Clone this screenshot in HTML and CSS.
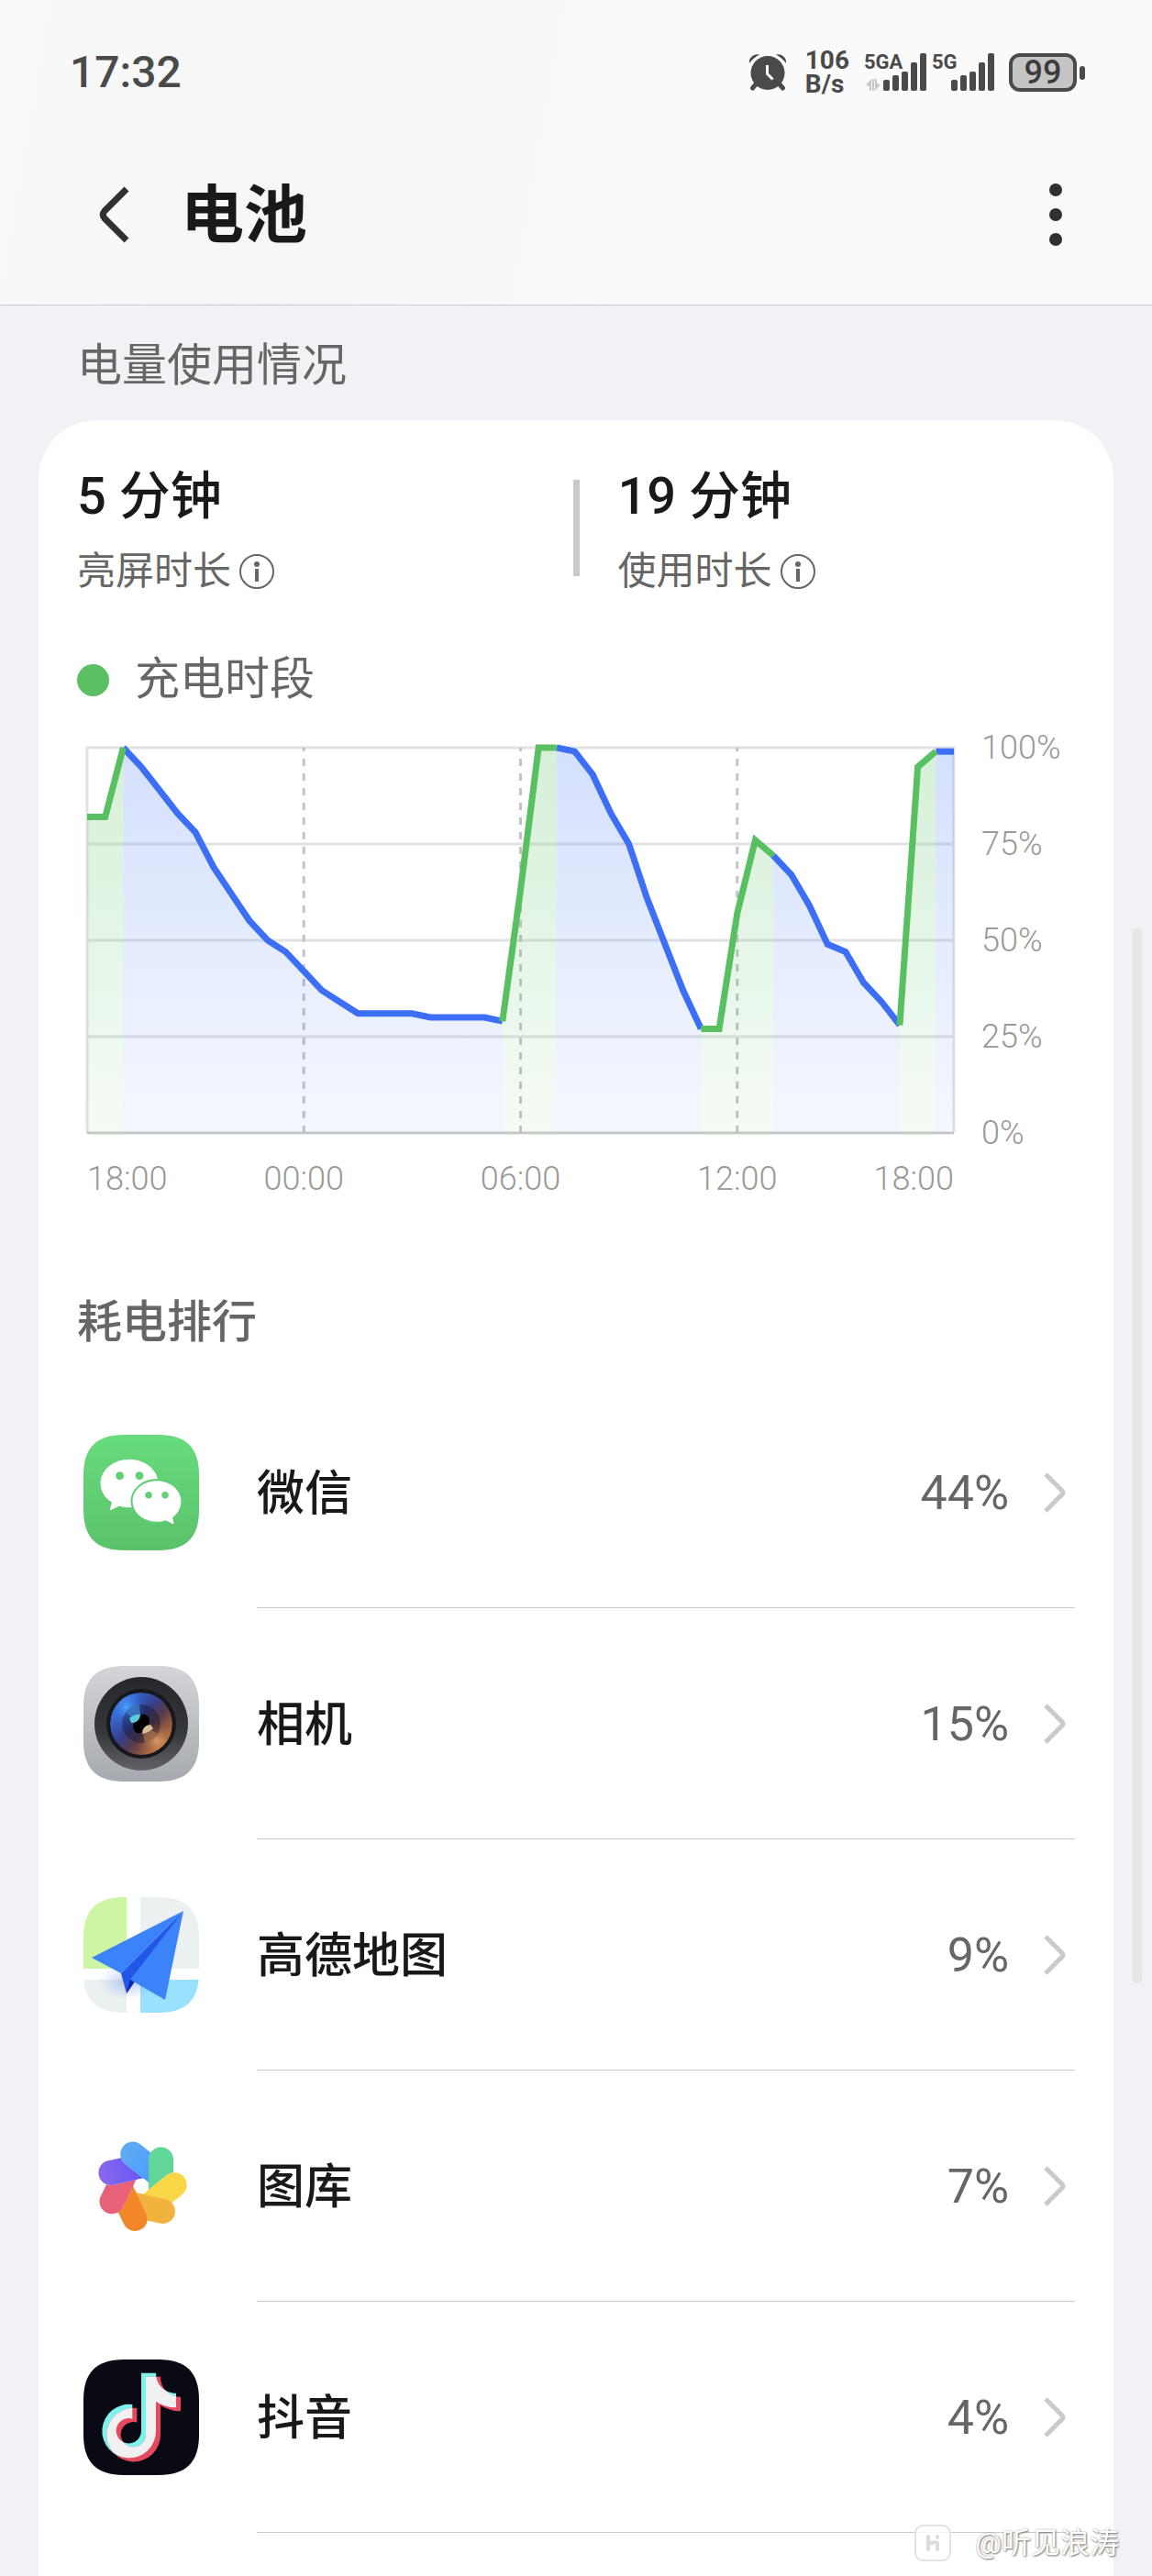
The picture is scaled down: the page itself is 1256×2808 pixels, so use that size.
FILE: index.html
```html
<!DOCTYPE html>
<html lang="zh-CN">
<head>
<meta charset="utf-8">
<meta name="viewport" content="width=device-width, initial-scale=1">
<title>电池</title>
<link rel="stylesheet" href="styles.css">
</head>
<body>
<svg class="defs" aria-hidden="true">
  <defs>
    <path id="tile" d="M0 44C0 14 14 0 44 0H82C112 0 126 14 126 44V82C126 112 112 126 82 126H44C14 126 0 112 0 82Z"/>
    <clipPath id="tile-clip"><use href="#tile"/></clipPath>
  </defs>
</svg>

<header class="header">
  <div class="status">
    <time class="clock">17:32</time>
    <div class="indicators">
      <svg class="alarm" viewBox="0 0 42 42" role="img" aria-label="闹钟">
        <g fill="none" stroke="#4a4a4a" stroke-width="5" stroke-linecap="round">
          <path d="M8 34L4.500 38M34 34L37.500 38"/>
        </g>
        <path d="M1 11C0 5 6 0 12 1.500C8 3.500 4 7 1 11ZM41 11C42 5 36 0 30 1.500C34 3.500 38 7 41 11Z" fill="#4a4a4a"/>
        <circle cx="21" cy="21.500" r="18.500" fill="#4a4a4a"/>
        <path d="M20.500 13V22.500L26.500 28.500" fill="none" stroke="#fafafa" stroke-width="3"/>
      </svg>
      <div class="speed"><span>106</span><span>B/s</span></div>
      <div class="signal">
        <span class="net">5GA</span>
        <svg class="bars" viewBox="0 0 68 42" aria-hidden="true">
          <g fill="#4a4a4a"><rect x="21" y="29" width="7" height="12" rx="2"/><rect x="31" y="24" width="7" height="17" rx="2"/><rect x="41" y="20" width="7" height="21" rx="2"/><rect x="51" y="10" width="7" height="31" rx="2"/><rect x="61" y="0" width="7" height="41" rx="2"/></g>
          <path d="M2 35L8 28V41H6V36ZM18 34L12 41V28H14V33ZM9 28H11V41H9Z" fill="#c6c6c6"/>
        </svg>
      </div>
      <div class="signal signal-second">
        <span class="net">5G</span>
        <svg class="bars" viewBox="0 0 68 42" aria-hidden="true">
          <g fill="#4a4a4a"><rect x="21" y="29" width="7" height="12" rx="2"/><rect x="31" y="24" width="7" height="17" rx="2"/><rect x="41" y="20" width="7" height="21" rx="2"/><rect x="51" y="10" width="7" height="31" rx="2"/><rect x="61" y="0" width="7" height="41" rx="2"/></g>
        </svg>
      </div>
      <div class="battery"><span class="level">99</span><i class="nub"></i></div>
    </div>
  </div>
  <div class="titlebar">
    <button class="icon-button" type="button" aria-label="返回">
      <svg class="back" viewBox="0 0 36 64"><path d="M31 4L7 28Q3.500 32 7 36L31 60" fill="none" stroke="#303030" stroke-width="7"/></svg>
    </button>
    <h1 class="title">电池</h1>
    <button class="icon-button more" type="button" aria-label="更多">
      <svg class="dots" viewBox="0 0 14 68"><g fill="#303030"><circle cx="7" cy="7" r="7"/><circle cx="7" cy="34" r="7"/><circle cx="7" cy="61" r="7"/></g></svg>
    </button>
  </div>
</header>

<main class="main">
  <h2 class="section-title">电量使用情况</h2>
  <section class="card">
    <div class="stats">
      <div class="stat">
        <strong class="stat-value">5 分钟</strong>
        <span class="stat-label">亮屏时长
          <button class="icon-button" type="button" aria-label="亮屏时长说明"><svg class="info" viewBox="0 0 40 40"><circle cx="20" cy="20" r="18" fill="none" stroke="#666" stroke-width="2"/><circle cx="20" cy="12" r="3" fill="#666"/><path d="M20 17V31" stroke="#666" stroke-width="4"/></svg></button>
        </span>
      </div>
      <div class="divider"></div>
      <div class="stat stat-second">
        <strong class="stat-value">19 分钟</strong>
        <span class="stat-label">使用时长
          <button class="icon-button" type="button" aria-label="使用时长说明"><svg class="info" viewBox="0 0 40 40"><circle cx="20" cy="20" r="18" fill="none" stroke="#666" stroke-width="2"/><circle cx="20" cy="12" r="3" fill="#666"/><path d="M20 17V31" stroke="#666" stroke-width="4"/></svg></button>
        </span>
      </div>
    </div>

    <div class="legend"><i class="legend-dot"></i>充电时段</div>

    <div class="chart">
      <!-- x: one unit per half hour (0-48), y: 100 minus the charge level -->
      <svg class="plot" viewBox="0 0 48 100" preserveAspectRatio="none" role="img" aria-label="电量曲线">
        <defs>
          <linearGradient id="fill-blue" gradientUnits="userSpaceOnUse" x1="0" y1="0" x2="0" y2="100"><stop offset="0" stop-color="#3c6ff5" stop-opacity=".22"/><stop offset="1" stop-color="#3c6ff5" stop-opacity=".05"/></linearGradient>
          <linearGradient id="fill-green" gradientUnits="userSpaceOnUse" x1="0" y1="0" x2="0" y2="100"><stop offset="0" stop-color="#59c162" stop-opacity=".25"/><stop offset="1" stop-color="#59c162" stop-opacity=".06"/></linearGradient>
        </defs>
        <g class="grid-lines">
          <path d="M0 100V0H48V100M0 25H48M0 50H48M0 75H48"/>
          <path class="axis" d="M0 100H48"/>
          <path class="dashes" d="M12 0V100M24 0V100M36 0V100"/>
        </g>
        <g fill="url(#fill-green)">
          <path d="M0 100V18H1L2 0V100Z"/>
          <path d="M23 100V71L24 37L25 0H26V100Z"/>
          <path d="M34 100V73H35L36 43L37 24L38 28V100Z"/>
          <path d="M45 100V72L46 5L47 1V100Z"/>
        </g>
        <g fill="url(#fill-blue)">
          <path d="M2 100V0L3 5L4 11L5 17L6 22L7 31L8 38L9 45L10 50L11 53L12 58L13 63L14 66L15 69H18L19 70H22L23 71V100Z"/>
          <path d="M26 100V0L27 1L28 7L29 17L30 25L31 39L32 51L33 63L34 73V100Z"/>
          <path d="M38 100V28L39 33L40 41L41 51L42 53L43 61L44 66L45 72V100Z"/>
          <path d="M47 100V1H48V100Z"/>
        </g>
        <g class="line line-blue">
          <path d="M2 0L3 5L4 11L5 17L6 22L7 31L8 38L9 45L10 50L11 53L12 58L13 63L14 66L15 69H18L19 70H22L23 71"/>
          <path d="M26 0L27 1L28 7L29 17L30 25L31 39L32 51L33 63L34 73"/>
          <path d="M38 28L39 33L40 41L41 51L42 53L43 61L44 66L45 72"/>
          <path d="M47 1H48"/>
        </g>
        <g class="line line-green">
          <path d="M0 18H1L2 0"/>
          <path d="M23 71L24 37L25 0H26"/>
          <path d="M34 73H35L36 43L37 24L38 28"/>
          <path d="M45 72L46 5L47 1"/>
        </g>
      </svg>
      <div class="y-labels"><span>100%</span><span>75%</span><span>50%</span><span>25%</span><span>0%</span></div>
      <div class="x-labels"><span>18:00</span><span>00:00</span><span>06:00</span><span>12:00</span><span>18:00</span></div>
    </div>

    <h2 class="rank-title">耗电排行</h2>
    <ul class="apps">
      <li>
        <a class="app" href="#wechat">
          <svg class="app-icon" viewBox="0 0 126 126" aria-hidden="true">
            <defs><linearGradient id="wx" x2="0" y2="1"><stop stop-color="#67dc7c"/><stop offset="1" stop-color="#5bc26c"/></linearGradient></defs>
            <use href="#tile" fill="url(#wx)"/>
            <path d="M50 26.700C67 26.700 81 38 81.800 53C81.800 68 68 79.300 50 79.300C46 79.300 43 79 39.500 77.500L30 82Q28.500 82.500 29 80.500L31 73.500C23 69 18.600 61 18.600 53C18.600 38.500 32.500 26.700 50 26.700Z" fill="#fff"/>
            <ellipse cx="80" cy="72.500" rx="28.500" ry="24.500" fill="#60ce73"/>
            <path d="M80 50.300C94.500 50.300 106.400 60 106.400 72.500C106.400 79.500 103 86 97 90L98.500 96Q98.500 97.500 97 97L89.500 93.200Q85 94.700 80 94.700C65.500 94.700 53.600 84.800 53.600 72.500C53.600 60 65.500 50.300 80 50.300Z" fill="#fff"/>
            <g fill="#61cf74"><circle cx="39.600" cy="44.700" r="4.400"/><circle cx="61" cy="44.700" r="4.400"/><circle cx="71" cy="65.700" r="3.700"/><circle cx="89" cy="65.700" r="3.700"/></g>
          </svg>
          <span class="app-body"><span class="app-name">微信</span><span class="app-share">44%</span><svg class="chevron" viewBox="0 0 24 44"><path d="M2 2L20 20Q22 22 20 24L2 42"/></svg></span>
        </a>
      </li>
      <li>
        <a class="app" href="#camera">
          <svg class="app-icon" viewBox="0 0 126 126" aria-hidden="true">
            <defs>
              <linearGradient id="cam-bg" x2="0" y2="1"><stop stop-color="#d3d5d8"/><stop offset="1" stop-color="#a6a9af"/></linearGradient>
              <linearGradient id="cam-ring" x2="0" y2="1"><stop stop-color="#26272a"/><stop offset=".6" stop-color="#36373a"/><stop offset="1" stop-color="#626367"/></linearGradient>
              <linearGradient id="cam-lens" x1=".1" y1=".2" x2=".85" y2=".9"><stop stop-color="#3872dc"/><stop offset=".4" stop-color="#34408c"/><stop offset=".62" stop-color="#583c48"/><stop offset="1" stop-color="#c5783c"/></linearGradient>
              <radialGradient id="cam-blue"><stop stop-color="#4fa4ff" stop-opacity=".95"/><stop offset="1" stop-color="#2b63e0" stop-opacity="0"/></radialGradient>
              <radialGradient id="cam-gold"><stop stop-color="#dfa26b" stop-opacity=".9"/><stop offset="1" stop-color="#a05a2c" stop-opacity="0"/></radialGradient>
              <clipPath id="cam-clip"><circle cx="63" cy="63" r="34"/></clipPath>
            </defs>
            <use href="#tile" fill="url(#cam-bg)"/>
            <circle cx="63" cy="63" r="51" fill="url(#cam-ring)"/>
            <circle cx="63" cy="63" r="38" fill="#17181c"/>
            <g clip-path="url(#cam-clip)">
              <circle cx="63" cy="63" r="34" fill="url(#cam-lens)"/>
              <ellipse cx="47" cy="45" rx="21" ry="25" fill="url(#cam-blue)"/>
              <ellipse cx="80" cy="82" rx="22" ry="22" fill="url(#cam-gold)"/>
            </g>
            <circle cx="63" cy="63" r="21" fill="#15122a" opacity=".4"/>
            <path d="M63 63L46 51A21 21 0 0 1 61 42Z" fill="#418ddd" opacity=".6"/>
            <path d="M63 63L81 74A21 21 0 0 1 67 84Z" fill="#c58458" opacity=".5"/>
            <ellipse cx="63" cy="63" rx="8" ry="11" transform="rotate(30 63 63)" fill="#000"/>
            <path d="M50 57Q56 52 62 53A9 9 0 0 1 52 62Z" fill="#59c9df"/>
            <path d="M76 68Q71 73 64 74A9 9 0 0 1 73 64Z" fill="#d9bf99"/>
          </svg>
          <span class="app-body"><span class="app-name">相机</span><span class="app-share">15%</span><svg class="chevron" viewBox="0 0 24 44"><path d="M2 2L20 20Q22 22 20 24L2 42"/></svg></span>
        </a>
      </li>
      <li>
        <a class="app" href="#amap">
          <svg class="app-icon" viewBox="0 0 126 126" aria-hidden="true">
            <defs><radialGradient id="map-shade"><stop stop-color="#3d6fe8" stop-opacity=".4"/><stop offset="1" stop-color="#7aa4ff" stop-opacity="0"/></radialGradient></defs>
            <g clip-path="url(#tile-clip)">
              <rect width="126" height="126" fill="#fff"/>
              <rect width="47" height="78" fill="#ccf5a4"/>
              <rect x="62" width="64" height="78" fill="#ebf0f0"/>
              <rect y="90" width="47" height="36" fill="#ebf0f0"/>
              <rect x="62" y="90" width="64" height="36" fill="#99e1fc"/>
              <ellipse cx="50" cy="92" rx="34" ry="20" fill="url(#map-shade)"/>
            </g>
            <path d="M109 15L9 66L41 83Z" fill="#3b83f8"/>
            <path d="M109 15L41 83L47 105L56 91Z" fill="#2356e6"/>
            <path d="M47 105L56 92L51 89Z" fill="#0d27ad"/>
            <path d="M109 15L51 90L89 112Z" fill="#3b83f8"/>
          </svg>
          <span class="app-body"><span class="app-name">高德地图</span><span class="app-share">9%</span><svg class="chevron" viewBox="0 0 24 44"><path d="M2 2L20 20Q22 22 20 24L2 42"/></svg></span>
        </a>
      </li>
      <li>
        <a class="app" href="#gallery">
          <svg class="app-icon" viewBox="-189 -189 378 378" aria-hidden="true">
            <defs>
              <path id="petal" d="M24 12V-87A40.500 40.500 0 0 1 105 -87V-44A40.500 40.500 0 0 0 83 -35.400Z"/>
              <linearGradient id="petal-blue" x2="0" y2="1"><stop stop-color="#5fabf2"/><stop offset="1" stop-color="#4b9fff"/></linearGradient>
              <linearGradient id="petal-purple" x2="0" y2="1"><stop stop-color="#8a68ea"/><stop offset="1" stop-color="#6559f6"/></linearGradient>
            </defs>
            <use href="#petal" fill="#60d798"/>
            <use href="#petal" fill="#f8d645" transform="rotate(51.430)"/>
            <use href="#petal" fill="#f1b33e" transform="rotate(102.860)"/>
            <use href="#petal" fill="#f28729" transform="rotate(154.290)"/>
            <use href="#petal" fill="#e96079" transform="rotate(205.710)"/>
            <use href="#petal" fill="url(#petal-purple)" transform="rotate(257.140)"/>
            <use href="#petal" fill="url(#petal-blue)" transform="rotate(308.570)"/>
            <circle r="24" fill="#fff"/>
          </svg>
          <span class="app-body"><span class="app-name">图库</span><span class="app-share">7%</span><svg class="chevron" viewBox="0 0 24 44"><path d="M2 2L20 20Q22 22 20 24L2 42"/></svg></span>
        </a>
      </li>
      <li>
        <a class="app" href="#douyin">
          <svg class="app-icon" viewBox="0 0 378 378" aria-hidden="true">
            <defs>
              <path id="note" d="M189 44H237C237 84 267 110 303 110V157C277 157 255 149 237 137V234A88 88 0 1 1 160 147V194A41 41 0 1 0 189 234Z"/>
              <clipPath id="note-clip"><use href="#note"/></clipPath>
            </defs>
            <use href="#tile" transform="scale(3)" fill="#0a0a14"/>
            <use href="#note" fill="#7df2ee"/>
            <use href="#note" transform="translate(15 12)" fill="#e6485d"/>
            <g clip-path="url(#note-clip)"><use href="#note" transform="translate(15 12)" fill="#f0f0f0"/></g>
          </svg>
          <span class="app-body"><span class="app-name">抖音</span><span class="app-share">4%</span><svg class="chevron" viewBox="0 0 24 44"><path d="M2 2L20 20Q22 22 20 24L2 42"/></svg></span>
        </a>
      </li>
    </ul>
  </section>
</main>

<div class="scrollbar" aria-hidden="true"></div>
<div class="watermark">
  <svg class="watermark-logo" viewBox="0 0 40 40" aria-hidden="true"><rect x="1" y="1" width="38" height="38" rx="8" fill="#fff" fill-opacity=".8" stroke="#e2e2e2" stroke-width="2"/><path d="M15 13V27M15 22Q20 18 25 20V27M25 13V14" fill="none" stroke="#dcdcdc" stroke-width="4" stroke-linecap="round"/></svg>
  <span>@听见浪涛</span>
</div>
</body>
</html>
```
FILE: styles.css
```css
* {
  box-sizing: border-box;
}

body {
  margin: 0;
  min-height: 100vh;
  display: flex;
  flex-direction: column;
  position: relative;
  background: #f1f2f6;
  color: #191919;
  font-family: Roboto, "Noto Sans CJK SC", sans-serif;
}

h1,
h2,
ul {
  margin: 0;
  padding: 0;
}

svg {
  display: block;
  flex: none;
}

.defs {
  position: absolute;
  width: 0;
  height: 0;
}

.icon-button {
  display: flex;
  padding: 0;
  border: 0;
  background: none;
}

/* Header */
.header {
  background: linear-gradient(100deg, #f8f9f9, #f6f6f6 25%, #fafafa 60%, #fafafa);
  border-bottom: 1px solid #c9cacc;
}

.status {
  display: flex;
  align-items: center;
  justify-content: space-between;
  height: 136px;
  padding: 22px 73px 0 76px;
  color: #4a4a4a;
}

.clock {
  font-size: 48px;
  font-weight: 500;
  line-height: 56px;
}

.indicators {
  display: flex;
  align-items: center;
}

.alarm {
  width: 42px;
  height: 42px;
}

.speed {
  display: flex;
  flex-direction: column;
  margin: 0 16px 0 20px;
  font-size: 28px;
  font-weight: 700;
  line-height: 26px;
}

.signal {
  position: relative;
  height: 42px;
}

.signal-second {
  margin-left: 6px;
}

.bars {
  width: 68px;
  height: 42px;
}

.net {
  position: absolute;
  top: -2px;
  left: 0;
  font-size: 22px;
  font-weight: 700;
  line-height: 24px;
}

.battery {
  display: flex;
  align-items: center;
  gap: 3px;
  margin-left: 16px;
}

.level {
  width: 74px;
  height: 42px;
  border: 4px solid #4a4a4a;
  border-radius: 12px;
  background: #c5c5c5;
  color: #3c3c3c;
  font-size: 36px;
  font-weight: 500;
  line-height: 34px;
  text-align: center;
}

.nub {
  width: 6px;
  height: 15px;
  border-radius: 3px;
  background: #4a4a4a;
}

.titlebar {
  display: flex;
  align-items: center;
  height: 196px;
  padding: 0 98px 0 107px;
}

.back {
  width: 36px;
  height: 64px;
}

.title {
  margin-left: 54px;
  padding-top: 4px;
  font-size: 69px;
  font-weight: 700;
  line-height: 80px;
}

.more {
  margin-left: auto;
}

.dots {
  width: 14px;
  height: 68px;
}

/* Card */
.main {
  flex: 1;
  display: flex;
  flex-direction: column;
  padding: 0 42px;
}

.section-title,
.rank-title {
  color: #666;
  font-size: 49px;
  font-weight: 500;
  line-height: 64px;
}

.section-title {
  padding: 34px 42px 27px;
  font-weight: 400;
}

.card {
  flex: 1;
  padding: 51px 42px 46px;
  border-radius: 64px 64px 0 0;
  background: #fff;
}

.stats {
  display: grid;
  grid-template-columns: 1fr 7px 1fr;
}

.stat {
  display: flex;
  flex-direction: column;
  gap: 22px;
}

.stat-second {
  padding-left: 42px;
}

.stat-value {
  font-size: 56px;
  font-weight: 500;
  line-height: 64px;
}

.stat-label {
  display: flex;
  align-items: center;
  gap: 8px;
  color: #666;
  font-size: 42px;
  line-height: 56px;
}

.info {
  width: 40px;
  height: 40px;
}

.divider {
  height: 105px;
  margin-top: 14px;
  background: #c9c9c9;
}

.legend {
  display: flex;
  align-items: center;
  gap: 28px;
  margin-top: 58px;
  color: #666;
  font-size: 49px;
  line-height: 64px;
}

.legend-dot {
  width: 35px;
  height: 35px;
  border-radius: 50%;
  background: #5bc062;
}

/* Chart */
.chart {
  display: grid;
  grid-template-columns: 1fr 102px;
  column-gap: 30px;
  row-gap: 30px;
  margin: 42px 0 0 11px;
  color: #999;
  font-size: 36px;
  font-weight: 300;
  line-height: 40px;
}

.plot {
  width: 100%;
  height: 420px;
  overflow: visible;
}

.plot path {
  vector-effect: non-scaling-stroke;
}

.grid-lines {
  fill: none;
  stroke: #e2e2e2;
  stroke-width: 3px;
}

.axis {
  stroke: #c9c9c9;
}

.dashes {
  stroke: #c4c4c4;
  stroke-dasharray: 8px 8px;
  stroke-dashoffset: 4px;
}

.line {
  fill: none;
  stroke-width: 7px;
}

.line-blue {
  stroke: #3c6ff5;
}

.line-green {
  stroke: #59c062;
}

.y-labels {
  display: flex;
  flex-direction: column;
  justify-content: space-between;
  margin: -20px 0;
}

.x-labels {
  display: grid;
  grid-template-columns: 1fr 2fr 2fr 2fr 1fr;
  text-align: center;
}

.x-labels span:first-child {
  text-align: left;
}

.x-labels span:last-child {
  text-align: right;
}

/* Ranking */
.rank-title {
  margin-top: 105px;
}

.apps {
  margin-top: 27px;
  list-style: none;
}

.app {
  display: flex;
  align-items: center;
  gap: 63px;
  padding-left: 7px;
  color: inherit;
  text-decoration: none;
}

.app-icon {
  width: 126px;
  height: 126px;
}

.app-body {
  flex: 1;
  display: flex;
  align-items: center;
  height: 252px;
  border-bottom: 1px solid #c9c9c9;
}

.app-name {
  flex: 1;
  padding-top: 4px;
  font-size: 52px;
  font-weight: 500;
  line-height: 64px;
}

.app-share {
  padding-top: 2px;
  color: #666;
  font-size: 52px;
  line-height: 64px;
}

.chevron {
  width: 24px;
  height: 44px;
  margin: 0 10px 0 38px;
  fill: none;
  stroke: #c9c9c9;
  stroke-width: 5px;
}

/* Overlays */
.scrollbar {
  position: fixed;
  top: 36%;
  right: 11px;
  width: 11px;
  height: 41%;
  border-radius: 6px;
  background: #e5e7e8;
}

.watermark {
  position: absolute;
  right: 36px;
  bottom: 16px;
  display: flex;
  align-items: center;
  gap: 26px;
  color: #fff;
  font-size: 32px;
  line-height: 40px;
  text-shadow: 1px 1px 2px #777, 0 0 2px #aaa;
}

.watermark-logo {
  width: 40px;
  height: 40px;
}
```
